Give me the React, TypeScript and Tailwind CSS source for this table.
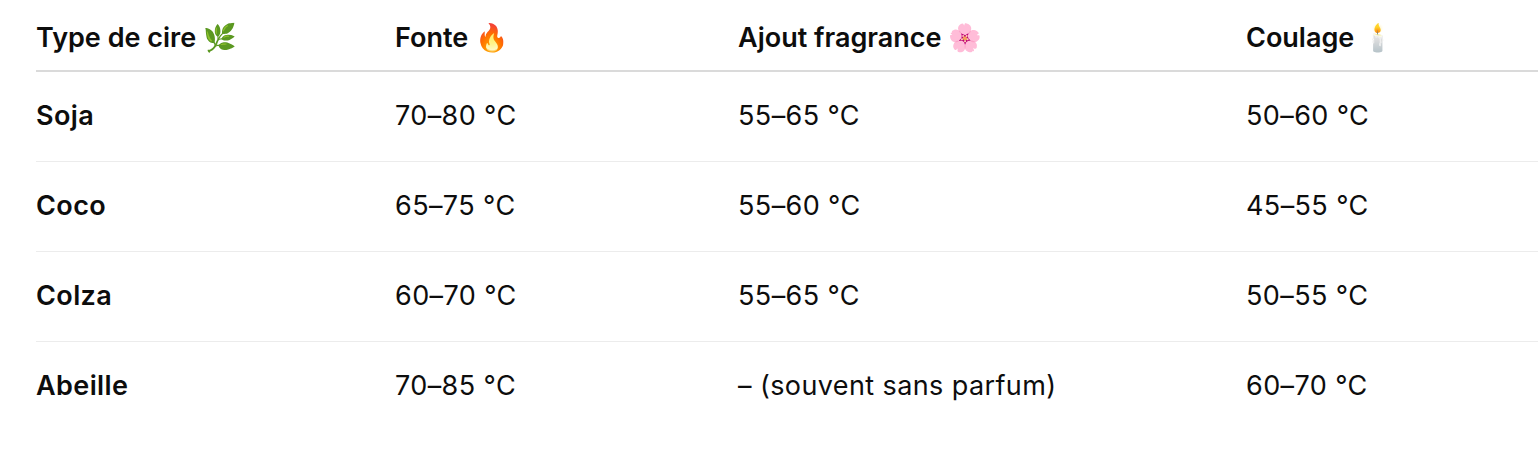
import React from "react";

const rows = [
  ["Soja", "70–80 °C", "55–65 °C", "50–60 °C"],
  ["Coco", "65–75 °C", "55–60 °C", "45–55 °C"],
  ["Colza", "60–70 °C", "55–65 °C", "50–55 °C"],
  ["Abeille", "70–85 °C", "– (souvent sans parfum)", "60–70 °C"],
];

export default function App() {
  return (
    <div
      className="w-[1538px] h-[468px] bg-white overflow-hidden pl-[36px] text-[#0d0d0d]"
      style={{ fontFamily: "Inter, 'Noto Sans', 'Noto Color Emoji', sans-serif" }}
    >
      <table className="w-[1620px] table-fixed border-collapse text-[27px] leading-[34px] tracking-[0.4px]">
        <colgroup>
          <col className="w-[359px]" />
          <col className="w-[343px]" />
          <col className="w-[508px]" />
          <col className="w-[410px]" />
        </colgroup>
        <thead>
          <tr className="h-[71px] border-b-2 border-[#dadada] tracking-[0px]">
            <th className="text-left font-semibold p-0 pt-[6px]">Type de cire 🌿</th>
            <th className="text-left font-semibold p-0 pt-[6px]">Fonte 🔥</th>
            <th className="text-left font-semibold p-0 pt-[6px]">Ajout fragrance 🌸</th>
            <th className="text-left font-semibold p-0 pt-[6px]">Coulage 🕯️</th>
          </tr>
        </thead>
        <tbody>
          {rows.map((r, i) => (
            <tr
              key={i}
              className={
                i < rows.length - 1
                  ? "h-[90px] border-b border-[#ececec]"
                  : "h-[90px]"
              }
            >
              <td className="p-0 font-semibold">{r[0]}</td>
              <td className="p-0">{r[1]}</td>
              <td className="p-0">{r[2]}</td>
              <td className="p-0">{r[3]}</td>
            </tr>
          ))}
        </tbody>
      </table>
    </div>
  );
}
